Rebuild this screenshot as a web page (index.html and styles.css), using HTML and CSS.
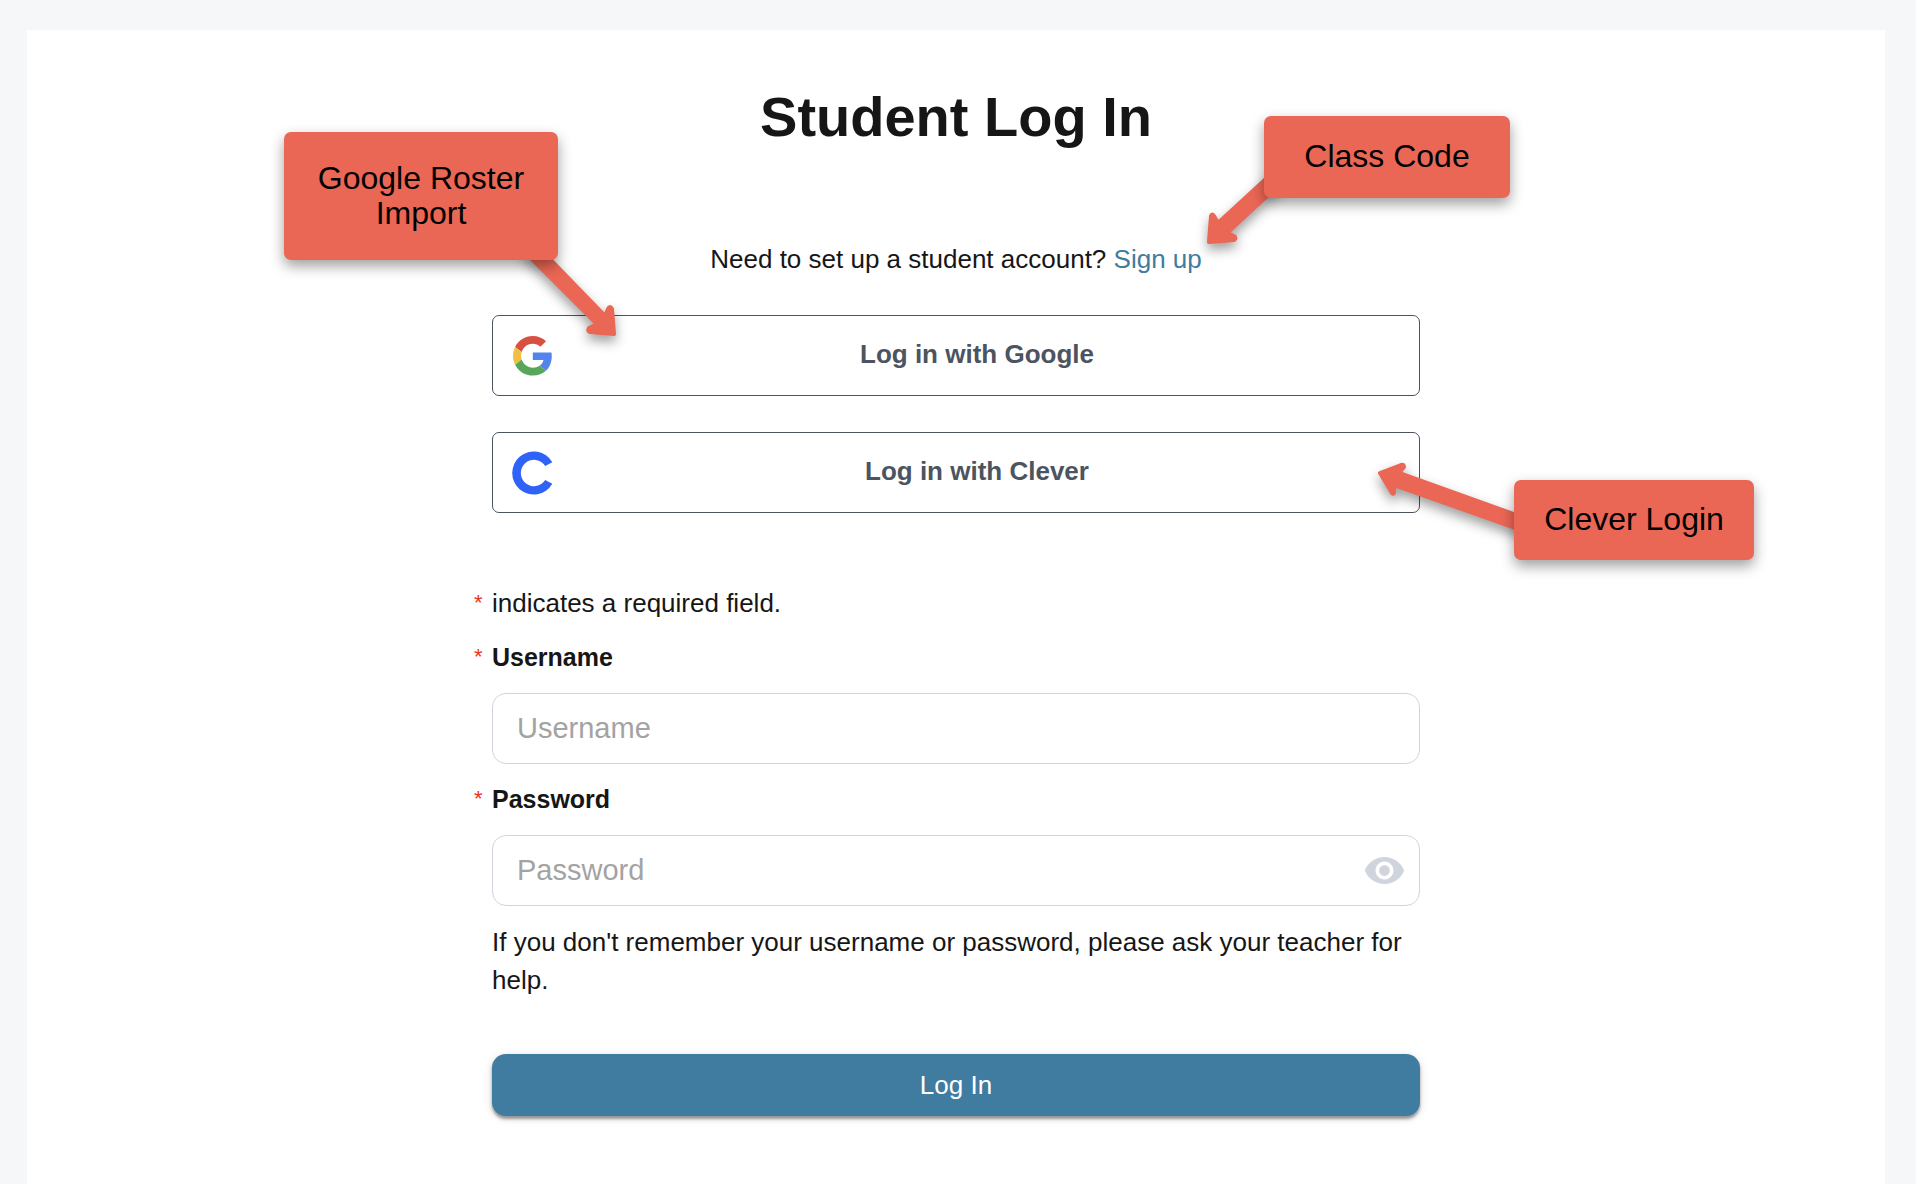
FILE: index.html
```html
<!DOCTYPE html>
<html lang="en">
<head>
<meta charset="utf-8">
<title>Student Log In</title>
<link rel="stylesheet" href="styles.css">
</head>
<body>
<main class="panel">
  <div class="column">
    <h1 class="title">Student Log In</h1>
    <p class="signup">Need to set up a student account? <a class="link" href="#">Sign up</a></p>

    <div class="providers">
      <button class="provider" type="button">
        <svg class="provider-icon" viewBox="0 0 42 42" aria-hidden="true">
          <g transform="translate(1 1) scale(.825)">
            <path fill="#d85140" d="M24 9.5c3.54 0 6.71 1.22 9.21 3.6l6.85-6.85C35.9 2.38 30.47 0 24 0 14.62 0 6.51 5.38 2.56 13.22l7.98 6.19C12.43 13.72 17.74 9.5 24 9.5z"/>
            <path fill="#5383ec" d="M46.98 24.55c0-1.57-.15-3.09-.38-4.55H24v9.02h12.94c-.58 2.96-2.26 5.48-4.78 7.18l7.73 6c4.51-4.18 7.09-10.36 7.09-17.65z"/>
            <path fill="#f1bf42" d="M10.53 28.59c-.48-1.45-.76-2.99-.76-4.59s.27-3.14.76-4.59l-7.98-6.19C.92 16.46 0 20.12 0 24c0 3.88.92 7.54 2.56 10.78l7.97-6.19z"/>
            <path fill="#58a55c" d="M24 48c6.48 0 11.93-2.13 15.89-5.81l-7.73-6c-2.15 1.45-4.92 2.3-8.16 2.3-6.26 0-11.57-4.22-13.47-9.91l-7.98 6.19C6.51 42.62 14.62 48 24 48z"/>
          </g>
        </svg>
        <span class="provider-label">Log in with Google</span>
      </button>
      <button class="provider" type="button">
        <svg class="provider-icon" viewBox="0 0 42 42" aria-hidden="true">
          <path fill="#2f62f6" d="M40.3 10.2A21.5 21.5 0 1 0 40.3 31.8L33.2 28A13.2 13.2 0 1 1 33.2 14Z"/>
        </svg>
        <span class="provider-label">Log in with Clever</span>
      </button>
    </div>

    <form class="form">
      <p class="row"><span class="star">*</span>indicates a required field.</p>
      <div class="field">
        <label class="row label" for="username"><span class="star">*</span>Username</label>
        <input class="input" id="username" type="text" placeholder="Username">
      </div>
      <div class="field">
        <label class="row label" for="password"><span class="star">*</span>Password</label>
        <div class="input-wrap">
          <input class="input" id="password" type="password" placeholder="Password">
          <button class="reveal" type="button" aria-label="Show password">
            <svg class="reveal-icon" viewBox="0 0 24 24" aria-hidden="true"><path fill="#d0d5dd" d="M12 4.5C7 4.5 2.73 7.61 1 12c1.73 4.39 6 7.5 11 7.5s9.27-3.11 11-7.5c-1.73-4.39-6-7.5-11-7.5zM12 17c-2.76 0-5-2.24-5-5s2.24-5 5-5 5 2.24 5 5-2.24 5-5 5zm0-8c-1.66 0-3 1.34-3 3s1.34 3 3 3 3-1.34 3-3-1.34-3-3-3z"/></svg>
          </button>
        </div>
      </div>
      <p class="help">If you don't remember your username or password, please ask your teacher for help.</p>
      <button class="submit" type="submit">Log In</button>
    </form>
  </div>

  <div class="notes">
    <svg class="arrow arrow-google" viewBox="516 236 120 120" aria-hidden="true"><path d="M523 250L597 324L589 328Q587 331 590 332L614 334L612 309Q610 305 608 309L605 316L541 250Z"/></svg>
    <svg class="arrow arrow-class" viewBox="1194 156 120 120" aria-hidden="true"><path d="M1280 166L1218 223L1214 216Q1212 213 1211 216L1209 242L1234 240Q1237 238 1234 236L1227 233L1280 184Z"/></svg>
    <svg class="arrow arrow-clever" viewBox="1364 446 180 100" aria-hidden="true"><path d="M1530 520L1399 473L1404 467Q1404 464 1401 465L1380 473L1392 493Q1394 495 1394 492L1394 485L1530 533Z"/></svg>
    <div class="note note-google">Google Roster Import</div>
    <div class="note note-class">Class Code</div>
    <div class="note note-clever">Clever Login</div>
  </div>
</main>
</body>
</html>
```
FILE: styles.css
```css
* { box-sizing: border-box; }

body {
  margin: 0;
  display: flex;
  min-height: 100vh;
  padding: 30px 31px 0 27px;
  background: #f5f7f9;
  color: #161616;
  font: 26px/38px "Liberation Sans", Arial, sans-serif;
}

button, input { font: inherit; }
h1, p { margin: 0; }

.panel {
  position: relative;
  flex: 1;
  padding: 55px 0;
  background: #fff;
}

.column {
  width: 50%;
  max-width: 928px;
  margin: 0 auto;
}

.title {
  font-size: 56px;
  line-height: 64px;
  text-align: center;
}

.signup {
  margin-top: 91px;
  text-align: center;
  white-space: nowrap;
}

.link { color: #3f7ca0; text-decoration: none; }

.providers {
  display: grid;
  gap: 36px;
  margin-top: 37px;
}

.provider {
  display: flex;
  align-items: center;
  height: 81px;
  padding: 0 19px;
  border: 1px solid #4b545f;
  border-radius: 7px;
  background: #fff;
  color: #4b545f;
  font-weight: 700;
}

.provider-icon {
  width: 42px;
  height: 42px;
  overflow: visible;
}

.provider-label {
  flex: 1;
  padding-bottom: 3px;
}

.form { margin-top: 71px; }

.row {
  display: flex;
  margin-left: -18px;
}

.star {
  width: 18px;
  color: #ec3323;
  font-size: 22px;
  font-weight: 400;
}

.field { margin-top: 16px; }

.label { font-size: 25px; font-weight: 700; }

.input {
  display: block;
  width: 100%;
  height: 71px;
  margin-top: 17px;
  padding: 0 24px;
  border: 1px solid #d0d5dd;
  border-radius: 14px;
  background: #fff;
  font-size: 29px;
}

.input::placeholder { color: #a3a3a3; opacity: 1; }

.input-wrap { position: relative; }
.input-wrap .input { padding-right: 70px; }

.reveal {
  position: absolute;
  top: 0;
  bottom: 0;
  right: 14px;
  padding: 0;
  border: 0;
  background: none;
}

.reveal-icon {
  display: block;
  width: 43px;
  height: 43px;
}

.help { margin-top: 17px; }

.submit {
  display: block;
  width: 100%;
  height: 62px;
  margin-top: 55px;
  padding: 0;
  border: 0;
  border-radius: 14px;
  background: #3f7ca0;
  color: #fff;
  box-shadow: 0 3px 3px rgba(0, 0, 0, .36), 0 2px 10px rgba(0, 0, 0, .14);
}

/* Call-outs pinned over the form, measured from the panel's centre line */
.notes {
  position: absolute;
  top: 0;
  left: 50%;
}

.note {
  position: absolute;
  display: flex;
  align-items: center;
  justify-content: center;
  padding-bottom: 1px;
  border-radius: 7px;
  background: #eb6755;
  color: #000;
  font-size: 32px;
  line-height: 35px;
  text-align: center;
  box-shadow: 0 6px 14px rgba(0, 0, 0, .38);
}

.note-google { top: 102px; left: -672px; width: 274px; height: 128px; }
.note-class { top: 86px; left: 308px; width: 246px; height: 82px; }
.note-clever { top: 450px; left: 558px; width: 240px; height: 80px; }

.arrow {
  position: absolute;
  fill: #eb6755;
  stroke: #eb6755;
  stroke-width: 4px;
  stroke-linejoin: round;
  overflow: visible;
  filter: drop-shadow(0 6px 6px rgba(0, 0, 0, .38));
}

.arrow-google { top: 206px; left: -440px; width: 120px; height: 120px; }
.arrow-class { top: 126px; left: 238px; width: 120px; height: 120px; }
.arrow-clever { top: 416px; left: 408px; width: 180px; height: 100px; }
```
